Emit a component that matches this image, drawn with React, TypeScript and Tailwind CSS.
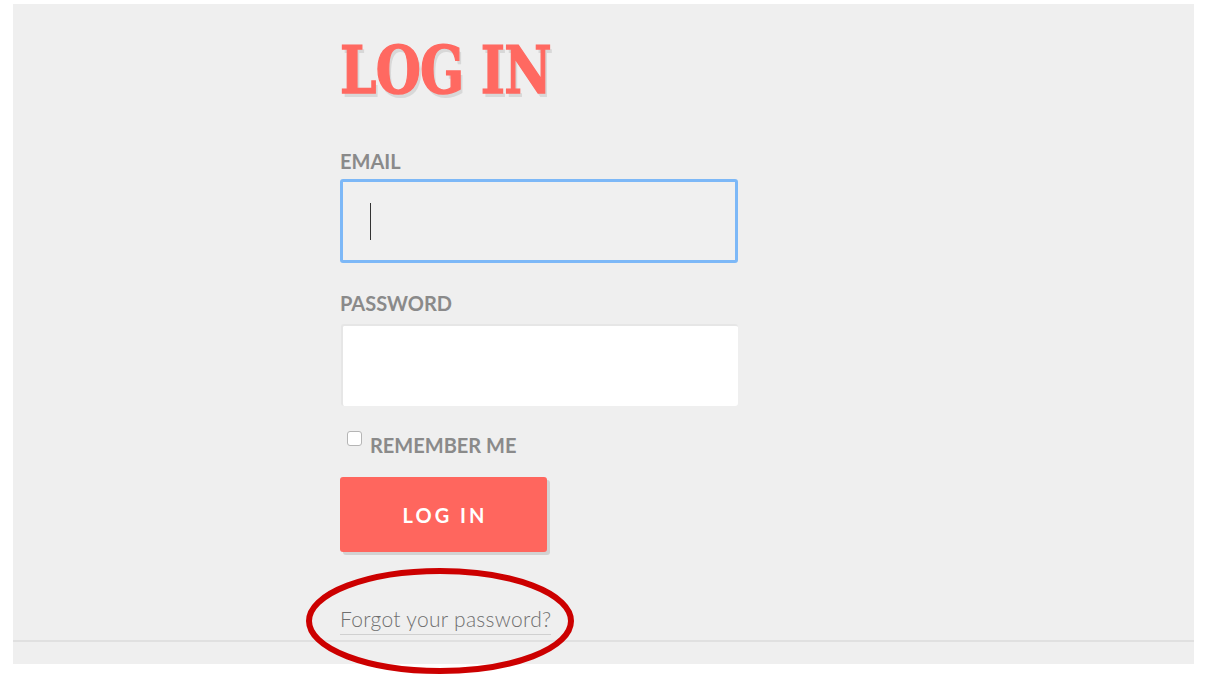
import React from "react";

export default function App() {
  return (
    <div className="relative w-[1205px] h-[676px] bg-white overflow-hidden">
      <div className="ml-[13px] mt-[4px] w-[1181px] h-[660px] bg-[#efefef] flex flex-col">
        <div className="h-[636px] pl-[327px] flex flex-col items-start">
          <h1
            className="mt-[33px] text-[66px] leading-[66px] font-black text-[#ff6961] tracking-[-1px] [text-shadow:3px_4px_0_#d8d8d8] [-webkit-text-stroke:1.5px_#ff6961] origin-left scale-x-[0.785] whitespace-nowrap"
            style={{ fontFamily: '"DejaVu Serif", serif' }}
          >
            LOG IN
          </h1>
          <label className="mt-[46px] text-[20px] leading-[24px] font-bold text-[#8a8a8a] font-['Lato',sans-serif]">
            EMAIL
          </label>
          <div className="mt-[6px] w-[398px] h-[84px] rounded-[3px] border-[3px] border-[#7db8f7] bg-[#f0f0f0] flex items-center pl-[27px]">
            <div className="w-[1px] h-[37px] bg-[#333]" />
          </div>
          <label className="mt-[28px] text-[20px] leading-[24px] font-bold text-[#8a8a8a] font-['Lato',sans-serif]">
            PASSWORD
          </label>
          <div className="mt-[9px] w-[397px] h-[82px] rounded-[3px] bg-white border-t-2 border-l-2 border-[#e6e6e6] ml-[1px]" />
          <div className="mt-[24px] flex items-start">
            <div className="ml-[7px] mt-[1px] w-[15px] h-[15px] rounded-[3px] border border-[#b5b5b5] bg-white" />
            <span className="ml-[8px] mt-[3px] text-[20px] leading-[24px] font-bold text-[#8a8a8a] font-['Lato',sans-serif]">
              REMEMBER ME
            </span>
          </div>
          <button className="mt-[20px] w-[207px] h-[75px] rounded-[3px] bg-[#ff665e] text-white text-[20px] font-bold tracking-[3px] shadow-[3px_3px_0_#d2d2d2] font-['Lato',sans-serif] pl-[3px]">
            LOG IN
          </button>
          <a className="mt-[54px] text-[21px] leading-[26px] font-light text-[#6f6f6f] tracking-[0.3px] border-b border-[#d0d0d0] pb-[2px] font-['Lato',sans-serif]">
            Forgot your password?
          </a>
        </div>
        <div className="h-[2px] bg-[#e0e0e0]" />
        <div className="flex-1 bg-[#efefef]" />
      </div>
      <svg className="absolute left-0 top-0 pointer-events-none" width="1205" height="676">
        <ellipse cx="440" cy="621" rx="131" ry="50" fill="none" stroke="#cc0000" strokeWidth="6" />
      </svg>
    </div>
  );
}
